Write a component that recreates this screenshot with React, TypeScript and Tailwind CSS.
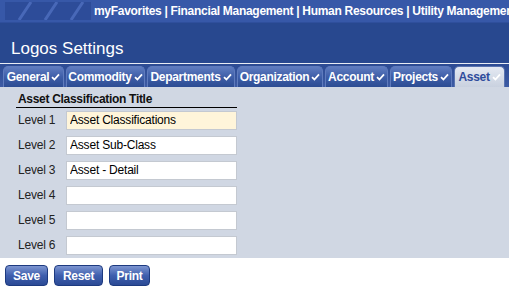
import React from 'react';

const tabs = [
  { name: 'General', w: 'w-[61px]' },
  { name: 'Commodity', w: 'w-[79px]' },
  { name: 'Departments', w: 'w-[88px]' },
  { name: 'Organization', w: 'w-[86px]' },
  { name: 'Account', w: 'w-[63px]' },
  { name: 'Projects', w: 'w-[62px]' },
  { name: 'Asset', w: 'w-[51px]' },
];

const levels = [
  { label: 'Level 1', value: 'Asset Classifications', active: true },
  { label: 'Level 2', value: 'Asset Sub-Class' },
  { label: 'Level 3', value: 'Asset - Detail' },
  { label: 'Level 4', value: '' },
  { label: 'Level 5', value: '' },
  { label: 'Level 6', value: '' },
];

function Check({ className }: { className?: string }) {
  return (
    <svg width="9" height="8" viewBox="0 0 9 8" className={`shrink-0 ${className ?? ''}`}>
      <path d="M1 4.2 L3.4 6.5 L8 1.3" fill="none" stroke="currentColor" strokeWidth="1.8" />
    </svg>
  );
}

function Logo() {
  return (
    <svg width="86" height="18" viewBox="0 0 86 18" className="shrink-0">
      <rect x="0" y="0" width="86" height="18" fill="#2d4c99" />
      <path d="M14 18 L26 0 M40 18 L52 0 M66 18 L78 0" stroke="#4868b8" strokeWidth="3" />
    </svg>
  );
}

export default function App() {
  return (
    <div className="w-[509px] h-[292px] overflow-hidden bg-white font-['Liberation_Sans',Arial,sans-serif]">
      {/* Top nav */}
      <div className="h-[23px] bg-[#3758a8] flex items-center pl-[5px] whitespace-nowrap overflow-hidden border-b border-[#2f4f9c]">
        <Logo />
        <span className="ml-[3px] shrink-0 text-white font-bold text-[12px] tracking-[-0.3px]">
          myFavorites | Financial Management | Human Resources | Utility Management
        </span>
      </div>

      {/* Title band */}
      <div className="h-[40px] bg-[#28488f] flex items-end pl-[11px] pb-[3px]">
        <span className="text-white text-[17px] leading-[22px]">Logos Settings</span>
      </div>

      {/* Tabs */}
      <div className="h-[24px] bg-gradient-to-b from-[#2c4b94] to-[#3d5ba4] border-t border-[#e8ecf4] flex items-end pl-[3px] gap-[2px]">
        {tabs.map((t) =>
          t.name === 'Asset' ? (
            <div
              key={t.name}
              className={`${t.w} h-[21px] flex items-center justify-center gap-[2px] rounded-t-[5px] bg-gradient-to-b from-[#e4e9f2] to-[#c9d1df] border border-b-0 border-[#5a74b0] text-[#2f4c9c] font-bold text-[12px] tracking-[-0.3px]`}
            >
              {t.name}
              <Check className="text-white" />
            </div>
          ) : (
            <div
              key={t.name}
              className={`${t.w} h-[21px] flex items-center justify-center gap-[2px] rounded-t-[5px] bg-gradient-to-b from-[#5f7cc0] via-[#3e5ea8] to-[#2c4c93] border border-b-0 border-[#5f7bbd] text-white font-bold text-[12px] tracking-[-0.3px]`}
            >
              {t.name}
              <Check />
            </div>
          )
        )}
      </div>

      {/* Content */}
      <div className="h-[171px] bg-[#d0d7e3] pl-[16px] pt-[5px]">
        <div className="w-[221px] border-b border-black text-[12px] font-bold text-[#111] pl-[2px] leading-[14px] pb-[1px] tracking-[-0.3px]">
          Asset Classification Title
        </div>
        <div className="flex flex-col gap-[7px] mt-[3px]">
          {levels.map((l) => (
            <div key={l.label} className="flex items-center h-[18px]">
              <span className="w-[50px] pl-[2px] text-[12px] text-[#222] tracking-[-0.2px]">{l.label}</span>
              <input
                readOnly
                value={l.value}
                className={`w-[171px] h-[19px] px-[3px] text-[12px] text-black border border-[#c4c9d1] outline-none tracking-[-0.2px] ${
                  l.active ? 'bg-[#fff5da]' : 'bg-white'
                }`}
              />
            </div>
          ))}
        </div>
      </div>

      {/* Buttons */}
      <div className="flex gap-[6px] pl-[5px] pt-[7px]">
        {[
          { b: 'Save', w: 'w-[43px]' },
          { b: 'Reset', w: 'w-[49px]' },
          { b: 'Print', w: 'w-[41px]' },
        ].map(({ b, w }) => (
          <button
            key={b}
            className={`${w} h-[21px] rounded-[4px] border border-[#1d3a80] bg-gradient-to-b from-[#7d95d0] via-[#3f5fae] to-[#2b4a95] text-white font-bold text-[12px] leading-none tracking-[-0.3px]`}
          >
            {b}
          </button>
        ))}
      </div>
    </div>
  );
}
